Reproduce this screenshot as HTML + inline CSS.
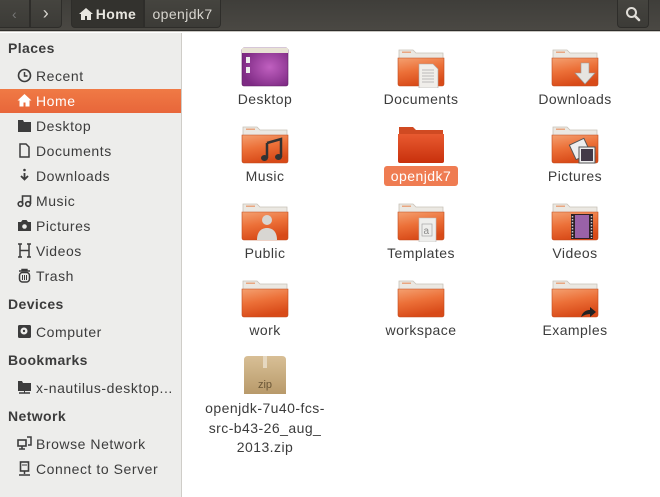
<!DOCTYPE html>
<html><head><meta charset="utf-8"><style>
*{margin:0;padding:0;box-sizing:border-box}
body{width:660px;height:497px;overflow:hidden;background:#fff;font-family:"Liberation Sans","DejaVu Sans",sans-serif;position:relative}
.tb{position:absolute;left:0;top:0;width:660px;height:31px;background:linear-gradient(#3f3e3a,#4a4843);border-bottom:1px solid #2e2d2a}
.tb:after{content:"";position:absolute;left:0;right:0;bottom:-2px;height:1px;background:#c9c7c2}
.btn{position:absolute;top:0;height:28px;border:1px solid #2e2d2a;border-top:none;background:linear-gradient(#45443f,#3c3b37);color:#d8d6d0;font-size:14px;display:flex;align-items:center;justify-content:center;letter-spacing:.4px}
.side{position:absolute;left:0;top:33px;width:182px;height:464px;background:#ededeb;border-right:1px solid #cfcdc8}
.h{position:absolute;left:8px;font-weight:bold;font-size:14px;color:#3c3c3c;letter-spacing:.4px}
.it{position:absolute;left:36px;font-size:14px;color:#3c3c3c;letter-spacing:.55px;white-space:nowrap}
.ic{position:absolute;left:17px;width:15px;height:15px}
.sel{position:absolute;left:0;top:56px;width:181px;height:24px;background:linear-gradient(#f07a45,#e8663a)}
.f{position:absolute;width:48px;height:42px}
.lb{position:absolute;width:150px;text-align:center;font-size:14px;color:#3c3c3c;line-height:19.5px;letter-spacing:.45px}
</style></head><body>
<svg width="0" height="0" style="position:absolute">
<defs>
<linearGradient id="og" x1="0" y1="0" x2="0.3" y2="1"><stop offset="0" stop-color="#f4a070"/><stop offset="0.5" stop-color="#ec7038"/><stop offset="1" stop-color="#d84a18"/></linearGradient>
<linearGradient id="rg" x1="0" y1="0" x2="0" y2="1"><stop offset="0" stop-color="#e85a30"/><stop offset="1" stop-color="#c8300c"/></linearGradient>
<symbol id="fold" viewBox="0 0 48 42">
<path d="M2 4h14l3 3h27v30H2z" fill="#ebe8e2" stroke="#c9c2b8" stroke-width=".8"/>
<rect x="5" y="5.5" width="9" height="1.5" fill="#e9a680"/>
<path d="M1 12h46v26a2 2 0 0 1-2 2H3a2 2 0 0 1-2-2z" fill="url(#og)" stroke="#c04a1c" stroke-width=".6"/>
</symbol>
</defs></svg>

<div class="tb">
<div class="btn" style="left:0;width:30px;border-left:none;color:#777">&#8249;</div>
<div class="btn" style="left:30px;width:32px;border-radius:0 0 4px 0;font-size:18px">&#8250;</div>
<div class="btn" style="left:71px;width:73px;background:#33322e;font-weight:bold;border-radius:0 0 0 4px;color:#e8e6e0">
<svg width="14" height="12" viewBox="0 0 14 12" style="margin-right:3px"><path d="M7 0L0 6h2v6h4V8h2v4h4V6h2z" fill="#e8e6e0"/></svg>Home</div>
<div class="btn" style="left:144px;width:77px;border-radius:0 0 4px 0">openjdk7</div>
<div class="btn" style="left:617px;width:32px;border-radius:0 0 4px 4px">
<svg width="16" height="16" viewBox="0 0 16 16"><circle cx="6.5" cy="6.5" r="4.5" fill="none" stroke="#e0ded8" stroke-width="2"/><path d="M10 10l4 4" stroke="#e0ded8" stroke-width="2.5" stroke-linecap="round"/></svg></div>
</div>

<div class="side">
<div class="sel"></div>
<div class="h" style="top:7px">Places</div>
<svg class="ic" style="top:35px" viewBox="0 0 15 15"><circle cx="7.5" cy="7.5" r="6" fill="none" stroke="#3c3c3c" stroke-width="1.6"/><path d="M7.5 4v4h3" fill="none" stroke="#3c3c3c" stroke-width="1.5"/></svg>
<div class="it" style="top:35px">Recent</div>
<svg class="ic" style="top:60px" viewBox="0 0 15 15"><path d="M7.5 1L0.5 7.5h2v6h4v-4h2v4h4v-6h2z" fill="#fff"/></svg>
<div class="it" style="top:60px;color:#fff">Home</div>
<svg class="ic" style="top:85px" viewBox="0 0 15 15"><path d="M1 2h5l1 2h7v10H1z" fill="#3c3c3c"/></svg>
<div class="it" style="top:85px">Desktop</div>
<svg class="ic" style="top:110px" viewBox="0 0 15 15"><path d="M3 1h6l3 3v10H3z" fill="none" stroke="#3c3c3c" stroke-width="1.5"/></svg>
<div class="it" style="top:110px">Documents</div>
<svg class="ic" style="top:135px" viewBox="0 0 15 15"><circle cx="7.5" cy="2" r="1.3" fill="#3c3c3c"/><path d="M7.5 5v6M4 8l3.5 3.5L11 8" fill="none" stroke="#3c3c3c" stroke-width="1.8"/></svg>
<div class="it" style="top:135px">Downloads</div>
<svg class="ic" style="top:160px" viewBox="0 0 15 15"><circle cx="3.5" cy="11" r="2.3" fill="none" stroke="#3c3c3c" stroke-width="1.6"/><circle cx="11" cy="11" r="2.3" fill="none" stroke="#3c3c3c" stroke-width="1.6"/><path d="M5.5 11V3h8v8" fill="none" stroke="#3c3c3c" stroke-width="1.6"/></svg>
<div class="it" style="top:160px">Music</div>
<svg class="ic" style="top:185px" viewBox="0 0 15 15"><path d="M1 4h3l1.5-2h4L11 4h3v9H1z" fill="#3c3c3c"/><circle cx="7.5" cy="8.5" r="2.3" fill="#ededeb"/></svg>
<div class="it" style="top:185px">Pictures</div>
<svg class="ic" style="top:210px" viewBox="0 0 15 15"><path d="M3 1v13M12 1v13M3 7.5h9M1 1h4M1 14h4M10 1h4M10 14h4" stroke="#3c3c3c" stroke-width="1.5" fill="none"/></svg>
<div class="it" style="top:210px">Videos</div>
<svg class="ic" style="top:235px" viewBox="0 0 15 15"><path d="M2 3h11M5 3V1.5h5V3" stroke="#3c3c3c" stroke-width="1.4" fill="none"/><rect x="2.5" y="4.5" width="10" height="9.5" rx="3" fill="none" stroke="#3c3c3c" stroke-width="1.5"/><path d="M5.5 7v5M7.5 7v5M9.5 7v5" stroke="#3c3c3c"/></svg>
<div class="it" style="top:235px">Trash</div>
<div class="h" style="top:263px">Devices</div>
<svg class="ic" style="top:291px" viewBox="0 0 15 15"><rect x="1" y="1" width="13" height="13" rx="1.5" fill="#3c3c3c"/><circle cx="7" cy="7" r="3.5" fill="#ededeb"/><circle cx="7" cy="7" r="1.2" fill="#3c3c3c"/></svg>
<div class="it" style="top:291px">Computer</div>
<div class="h" style="top:319px">Bookmarks</div>
<svg class="ic" style="top:347px" viewBox="0 0 15 15"><path d="M1 1h4l1 2h8v8H1z" fill="#3c3c3c"/><path d="M2 13h11" stroke="#3c3c3c" stroke-width="1.5"/><path d="M7.5 11v2" stroke="#3c3c3c"/></svg>
<div class="it" style="top:347px">x-nautilus-desktop...</div>
<div class="h" style="top:375px">Network</div>
<svg class="ic" style="top:403px" viewBox="0 0 15 15"><rect x="1" y="4" width="8" height="6" fill="none" stroke="#3c3c3c" stroke-width="1.6"/><path d="M2 13h6M5 10v3" stroke="#3c3c3c" stroke-width="1.5"/><path d="M10 1h4v8h-3" fill="none" stroke="#3c3c3c" stroke-width="1.5"/></svg>
<div class="it" style="top:403px">Browse Network</div>
<svg class="ic" style="top:428px" viewBox="0 0 15 15"><rect x="3.5" y="1" width="8" height="9" fill="none" stroke="#3c3c3c" stroke-width="1.6"/><path d="M5 4h5" stroke="#3c3c3c"/><path d="M7.5 10v3M2 14h11" stroke="#3c3c3c" stroke-width="1.5"/></svg>
<div class="it" style="top:428px">Connect to Server</div>
</div>

<svg class="f" style="left:241px;top:46px" viewBox="0 0 48 42"><defs><radialGradient id="pg" cx=".6" cy=".5" r=".6"><stop offset="0" stop-color="#c060c0"/><stop offset="1" stop-color="#7e2a84"/></radialGradient></defs><rect x="1" y="2" width="46" height="38" rx="2" fill="url(#pg)" stroke="#5e1e62" stroke-width=".6"/><rect x="1" y="2" width="46" height="5" fill="#e8e2d4"/><rect x="5" y="11" width="4" height="6" fill="#eee"/><rect x="5" y="21" width="4" height="6" fill="#eee"/></svg>
<div class="lb" style="left:190px;top:90px">Desktop</div>
<svg class="f" style="left:397px;top:46px"><use href="#fold"/><path d="M22 18h14l5 5v19H22z" fill="#f0eeea" stroke="#aaa" stroke-width=".6"/><path d="M25 24h12M25 27h12M25 30h12M25 33h12M25 36h12" stroke="#aaa" stroke-width=".7"/></svg>
<div class="lb" style="left:346px;top:90px">Documents</div>
<svg class="f" style="left:551px;top:46px"><use href="#fold"/><path d="M30 17h8v10h6L34 38 24 27h6z" fill="#e6e4e0" stroke="#999" stroke-width=".6"/></svg>
<div class="lb" style="left:500px;top:90px">Downloads</div>

<svg class="f" style="left:241px;top:123px"><use href="#fold"/><path d="M26 20l14-4v18" fill="none" stroke="#333" stroke-width="2.5"/><ellipse cx="23.5" cy="35" rx="3.5" ry="3" fill="#333"/><ellipse cx="37.5" cy="34" rx="3.5" ry="3" fill="#333"/><path d="M26 20v15" stroke="#333" stroke-width="2.5"/></svg>
<div class="lb" style="left:190px;top:167px">Music</div>
<svg class="f" style="left:397px;top:123px" viewBox="0 0 48 42"><path d="M2 4h14l3 3h27v30H2z" fill="#d04a22"/><path d="M1 11h46v27a2 2 0 0 1-2 2H3a2 2 0 0 1-2-2z" fill="url(#rg)"/></svg>
<div style="position:absolute;left:384px;top:166px;width:74px;height:20px;background:#ef7c52;border-radius:3px;color:#fff;font-size:14px;text-align:center;line-height:20px;letter-spacing:.45px">openjdk7</div>
<svg class="f" style="left:551px;top:123px"><use href="#fold"/><rect x="21" y="18" width="16" height="16" fill="#eee" stroke="#555" transform="rotate(-25 29 26)"/><rect x="28" y="24" width="16" height="16" fill="#eee" stroke="#555"/><rect x="30" y="26" width="12" height="12" fill="#433a48"/></svg>
<div class="lb" style="left:500px;top:167px">Pictures</div>

<svg class="f" style="left:241px;top:200px"><use href="#fold"/><circle cx="26" cy="20" r="5" fill="#d8d6d2"/><path d="M16 40c0-9 5-12 10-12s10 3 10 12z" fill="#d8d6d2"/></svg>
<div class="lb" style="left:190px;top:244px">Public</div>
<svg class="f" style="left:397px;top:200px"><use href="#fold"/><path d="M22 18h17v24H22z" fill="#eeeeec" stroke="#bbb" stroke-width=".6"/><rect x="25" y="24" width="10" height="12" fill="none" stroke="#999" stroke-width=".6"/><text x="26.5" y="34" font-size="10" fill="#888" font-family="Liberation Sans">a</text></svg>
<div class="lb" style="left:346px;top:244px">Templates</div>
<svg class="f" style="left:551px;top:200px"><use href="#fold"/><rect x="20" y="14" width="22" height="25" fill="#2e2228"/><rect x="24" y="15" width="14" height="23" fill="#9a62a8"/><path d="M21.5 16v22M40.5 16v22" stroke="#ccc" stroke-width="1.5" stroke-dasharray="1.5 1.5"/></svg>
<div class="lb" style="left:500px;top:244px">Videos</div>

<svg class="f" style="left:241px;top:277px"><use href="#fold"/></svg>
<div class="lb" style="left:190px;top:321px">work</div>
<svg class="f" style="left:397px;top:277px"><use href="#fold"/></svg>
<div class="lb" style="left:346px;top:321px">workspace</div>
<svg class="f" style="left:551px;top:277px"><use href="#fold"/><path d="M30 40c2-6 6-7 9-7v-3l6 5-6 5v-3c-3 0-6 1-9 3z" fill="#222"/></svg>
<div class="lb" style="left:500px;top:321px">Examples</div>

<svg class="f" style="left:241px;top:354px" viewBox="0 0 48 42"><defs><linearGradient id="bx" x1="0" y1="0" x2="0" y2="1"><stop offset="0" stop-color="#d8bf96"/><stop offset="1" stop-color="#b89a6a"/></linearGradient></defs><path d="M3 6q0-4 4-4h34q4 0 4 4v34H3z" fill="url(#bx)"/><rect x="22" y="2" width="4" height="12" fill="#e6d8c0"/><text x="24" y="34" text-anchor="middle" font-size="11" fill="#6a5636" font-family="Liberation Sans">zip</text></svg>
<div class="lb" style="left:190px;top:399px">openjdk-7u40-fcs-<br>src-b43-26_aug_<br>2013.zip</div>
</body></html>
